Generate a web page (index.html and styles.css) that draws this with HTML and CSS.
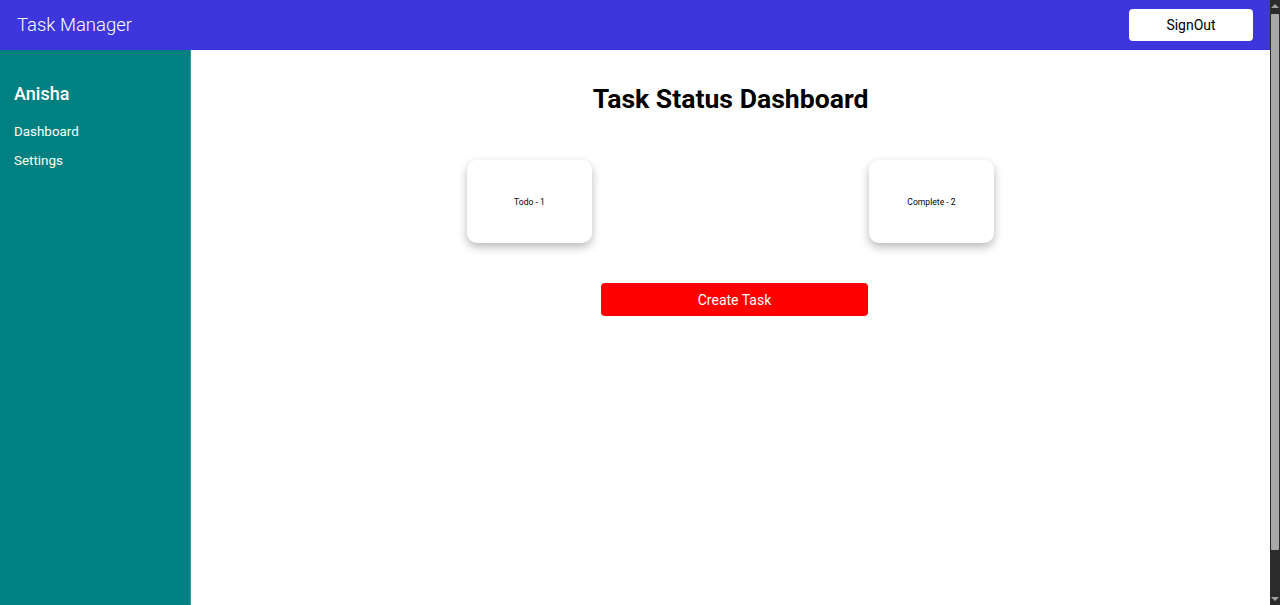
FILE: index.html
```html
<!DOCTYPE html>
<html>
<head>
<meta charset="utf-8">
<title>Task Manager</title>
<link rel="stylesheet" href="styles.css">
</head>
<body>
<div class="page">
  <header class="topbar">
    <div class="brand">Task Manager</div>
    <button class="signout">SignOut</button>
  </header>
  <div class="layout">
    <aside class="sidebar">
      <div class="user">Anisha</div>
      <nav class="nav">
        <a class="nav-link">Dashboard</a>
        <a class="nav-link">Settings</a>
      </nav>
    </aside>
    <main class="main">
      <h1 class="title">Task Status Dashboard</h1>
      <div class="cards">
        <div class="card">Todo - 1</div>
        <div class="card">Complete - 2</div>
      </div>
      <div class="actions">
        <button class="create">Create Task</button>
      </div>
    </main>
  </div>
</div>
<div class="scrollbar">
  <div class="arrow up"></div>
  <div class="track"><div class="thumb"></div></div>
  <div class="arrow down"></div>
</div>
</body>
</html>
```
FILE: styles.css
```css
* { box-sizing: border-box; }
html, body { margin: 0; padding: 0; }
body {
  font-family: Roboto, "Liberation Sans", sans-serif;
  background: #ffffff;
  color: #000;
  padding-right: 10px;
}
.page { width: 1270px; }
.topbar {
  height: 50px;
  background: #3c36dc;
  display: flex;
  align-items: center;
  justify-content: space-between;
  padding: 0 17px 0 17px;
}
.brand {
  color: #fff;
  font-size: 18.5px;
  font-weight: 300;
}
.signout {
  width: 124px;
  height: 32px;
  border: none;
  background: #fff;
  border-radius: 4px;
  font-family: Roboto, "Liberation Sans", sans-serif;
  font-size: 14px;
  color: #000;
}
.layout {
  display: flex;
  min-height: 100vh;
}
.sidebar {
  width: 191px;
  flex: none;
  background: #008080;
  border-right: 1px solid #2a9a96;
  padding: 33px 14px 0 14px;
  color: #fff;
}
.user {
  font-size: 18px;
  font-weight: 500;
  margin-bottom: 19px;
}
.nav {
  display: flex;
  flex-direction: column;
  gap: 12px;
}
.nav-link {
  font-size: 13.4px;
  color: #fff;
  line-height: 17px;
}
.main {
  flex: 1;
  display: flex;
  flex-direction: column;
  align-items: center;
}
.title {
  margin: 32px 0 0 0;
  font-size: 26.6px;
  font-weight: 700;
  line-height: 33px;
}
.cards {
  display: flex;
  gap: 277px;
  margin-top: 45px;
}
.card {
  width: 125px;
  height: 83px;
  background: #fff;
  border-radius: 10px;
  box-shadow: 0 4px 10px rgba(0,0,0,0.28);
  display: flex;
  align-items: center;
  justify-content: center;
  font-size: 8.6px;
  color: #000;
}
.actions {
  margin-top: 40px;
  padding-left: 8px;
}
.create {
  width: 267px;
  height: 33px;
  border: none;
  border-radius: 4px;
  background: #ff0000;
  color: #fff;
  font-family: Roboto, "Liberation Sans", sans-serif;
  font-size: 14px;
}
.scrollbar {
  position: fixed;
  top: 0;
  right: 0;
  width: 10px;
  height: 100vh;
  background: #2b2b2b;
  display: flex;
  flex-direction: column;
  align-items: center;
}
.arrow {
  width: 0;
  height: 0;
  border-left: 4px solid transparent;
  border-right: 4px solid transparent;
  flex: none;
  margin: 4px 0;
}
.arrow.up { border-bottom: 4px solid #a3a3a3; }
.arrow.down { border-top: 4px solid #a3a3a3; }
.track {
  flex: 1;
  width: 100%;
  padding: 2px 1px;
}
.thumb {
  width: 100%;
  height: 536px;
  background: #a8a8a8;
  border-radius: 1px;
}
```
